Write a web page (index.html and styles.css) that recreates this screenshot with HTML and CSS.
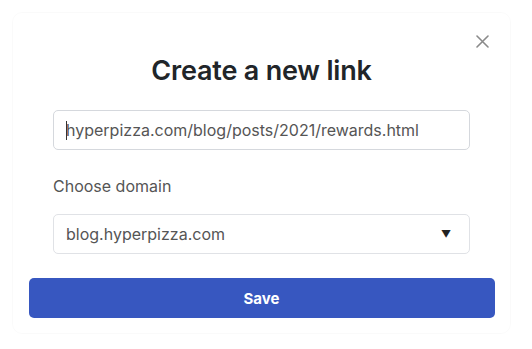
FILE: index.html
```html
<!DOCTYPE html>
<html>
<head>
<meta charset="utf-8">
<link rel="stylesheet" href="styles.css">
</head>
<body>
<div class="modal">
  <button class="close" aria-label="Close">
    <svg width="13" height="13" viewBox="0 0 13 13"><path d="M1 1L12 12M12 1L1 12" stroke="#8a8a8a" stroke-width="1.6" stroke-linecap="round"/></svg>
  </button>
  <h1 class="title">Create a new link</h1>
  <div class="field">
    <div class="input"><span class="caret"></span>hyperpizza.com/blog/posts/2021/rewards.html</div>
  </div>
  <label class="label">Choose domain</label>
  <div class="field">
    <div class="input select"><span>blog.hyperpizza.com</span><span class="arrow">▼</span></div>
  </div>
  <button class="save">Save</button>
</div>
</body>
</html>
```
FILE: styles.css
```css
* { box-sizing: border-box; }
html, body { margin: 0; background: #fff; }
body { font-family: Inter, "Noto Sans", sans-serif; }
.modal {
  position: relative;
  margin: 12px;
  width: 499px;
  height: 322px;
  border-radius: 10px;
  border: 1px solid rgba(0,0,0,0.02);
  padding: 40px 16px 0 16px;
  display: flex;
  flex-direction: column;
  align-items: center;
}
.close {
  position: absolute;
  top: 22px;
  right: 21px;
  border: 0;
  background: none;
  padding: 0;
  width: 13px;
  height: 13px;
  display: flex;
}
.title {
  margin: 0;
  font-size: 27px;
  font-weight: 600;
  color: #212529;
  line-height: 36px;
  letter-spacing: -0.2px;
}
.field { width: 417px; }
.title + .field { margin-top: 21px; }
.input {
  height: 40px;
  border: 1px solid #d5d8dd;
  border-radius: 5px;
  padding: 0 12px;
  display: flex;
  align-items: center;
  font-size: 16px;
  color: #555;
}
.caret {
  display: inline-block;
  width: 1px;
  height: 19px;
  background: #333;
  margin-right: -1px;
}
.label {
  width: 417px;
  margin-top: 27px;
  font-size: 16px;
  color: #555;
  line-height: 18px;
}
.label + .field { margin-top: 19px; }
.select { justify-content: space-between; border-color: #e0e2e6; }
.arrow { font-size: 10px; color: #222; margin-right: 6px; }
.save {
  margin-top: 24px;
  width: 466px;
  height: 40px;
  border: 0;
  border-radius: 5px;
  background: #3757c0;
  color: #fff;
  font-family: Inter, sans-serif;
  font-weight: 700;
  font-size: 15px;
}
```
